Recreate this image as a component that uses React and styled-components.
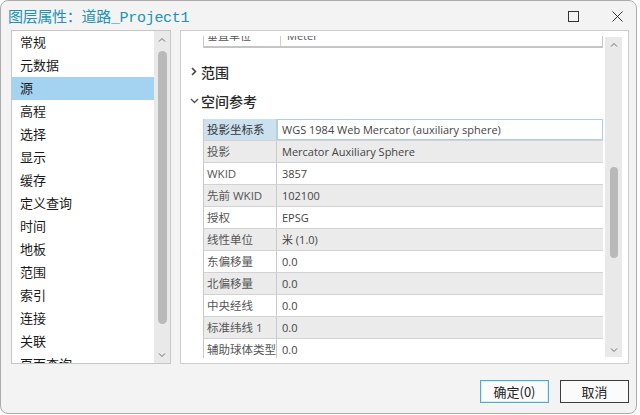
import React from "react"
import styled, { createGlobalStyle } from "styled-components"

const GlobalStyle = createGlobalStyle`
  html, body {
    margin: 0;
    padding: 0;
    background: #ffffff;
  }
  body {
    font-family: "Noto Sans CJK SC", sans-serif;
  }
`

const navItems = [
  "常规",
  "元数据",
  "源",
  "高程",
  "选择",
  "显示",
  "缓存",
  "定义查询",
  "时间",
  "地板",
  "范围",
  "索引",
  "连接",
  "关联",
  "页面查询",
]

const spatialRows = [
  ["投影坐标系", "WGS 1984 Web Mercator (auxiliary sphere)"],
  ["投影", "Mercator Auxiliary Sphere"],
  ["WKID", "3857"],
  ["先前 WKID", "102100"],
  ["授权", "EPSG"],
  ["线性单位", "米 (1.0)"],
  ["东偏移量", "0.0"],
  ["北偏移量", "0.0"],
  ["中央经线", "0.0"],
  ["标准纬线 1", "0.0"],
  ["辅助球体类型", "0.0"],
]

const ChevronUp = () => (
  <svg width="8" height="5" viewBox="0 0 8 5">
    <polyline points="1,4.5 4,1.5 7,4.5" fill="none" stroke="#6a6a6a" strokeWidth="1" />
  </svg>
)

const ChevronDown = () => (
  <svg width="8" height="5" viewBox="0 0 8 5">
    <polyline points="1,0.5 4,3.5 7,0.5" fill="none" stroke="#6a6a6a" strokeWidth="1" />
  </svg>
)

const Scrollbar = ({ width, thumbTop, thumbHeight, thumbWidth, arrow }) => (
  <ScrollTrack $width={width}>
    <ScrollArrow $h={arrow}>
      <ChevronUp />
    </ScrollArrow>
    <ThumbLane>
      <Thumb $top={thumbTop} $height={thumbHeight} $width={thumbWidth} />
    </ThumbLane>
    <ScrollArrow $h={arrow}>
      <ChevronDown />
    </ScrollArrow>
  </ScrollTrack>
)

const SectionHeader = ({ open, gap, children }) => (
  <Header $gap={gap}>
    <Caret>
      {open ? (
        <svg width="9" height="6" viewBox="0 0 9 6">
          <polyline points="1,1 4.5,4.5 8,1" fill="none" stroke="#555" strokeWidth="1.4" />
        </svg>
      ) : (
        <svg width="6" height="9" viewBox="0 0 6 9">
          <polyline points="1,1 4.5,4.5 1,8" fill="none" stroke="#444" strokeWidth="1.6" />
        </svg>
      )}
    </Caret>
    {children}
  </Header>
)

const App = () => (
  <>
    <GlobalStyle />
    <Window>
      <TitleBar>
        <Title>图层属性：道路_Project1</Title>
        <Controls>
          <svg width="11" height="11" viewBox="0 0 11 11">
            <rect x="0.5" y="0.5" width="10" height="10" fill="none" stroke="#333" strokeWidth="1" />
          </svg>
          <svg width="11" height="11" viewBox="0 0 11 11">
            <path d="M0.5 0.5 L10.5 10.5 M10.5 0.5 L0.5 10.5" stroke="#333" strokeWidth="1" />
          </svg>
        </Controls>
      </TitleBar>

      <Body>
        <NavPanel>
          <NavList>
            {navItems.map((item) => (
              <NavItem key={item} $selected={item === "源"}>
                {item}
              </NavItem>
            ))}
          </NavList>
          <Scrollbar width={16} thumbTop={4} thumbHeight={273} thumbWidth={9} arrow={16} />
        </NavPanel>

        <DetailPanel>
          <DetailContent>
            <Viewport>
              <Scrolled>
                <TopTable>
                  <TopRow>
                    <TopLabel>垂直单位</TopLabel>
                    <TopValue>Meter</TopValue>
                  </TopRow>
                </TopTable>
                <SectionHeader gap={9}>范围</SectionHeader>
                <SectionHeader open gap={0}>空间参考</SectionHeader>
                <PropTable>
                  {spatialRows.map(([label, value], i) => (
                    <PropRow key={label} $alt={i % 2 === 1}>
                      <PropLabel $active={i === 0}>{label}</PropLabel>
                      <PropValue $editing={i === 0}>{value}</PropValue>
                    </PropRow>
                  ))}
                </PropTable>
              </Scrolled>
            </Viewport>
          </DetailContent>
          <DetailScroll>
            <Scrollbar width={17} thumbTop={116} thumbHeight={91} thumbWidth={8} arrow={14} />
          </DetailScroll>
        </DetailPanel>
      </Body>

      <Footer>
        <DialogButton $primary>确定(0)</DialogButton>
        <DialogButton>取消</DialogButton>
      </Footer>
    </Window>
  </>
)

export default App

const Window = styled.div`
  width: 637px;
  height: 414px;
  box-sizing: border-box;
  border: 1px solid #acacac;
  border-radius: 8px;
  background: #f3f3f3;
  display: flex;
  flex-direction: column;
  overflow: hidden;
`

const TitleBar = styled.div`
  height: 29px;
  flex-shrink: 0;
  display: flex;
  align-items: center;
  padding: 0 13px 0 7px;
`

const Title = styled.div`
  font-family: "Liberation Mono", "Noto Sans CJK SC", monospace;
  font-size: 15px;
  color: #2192b5;
  letter-spacing: -0.3px;
  white-space: nowrap;
`

const Controls = styled.div`
  margin-left: auto;
  display: flex;
  align-items: center;
  gap: 33px;
  padding-top: 2px;
`

const Body = styled.div`
  height: 334px;
  flex-shrink: 0;
  display: flex;
  gap: 9px;
  padding: 0 7px 0 10px;
`

const NavPanel = styled.div`
  width: 160px;
  box-sizing: border-box;
  border: 1px solid #c6c6c6;
  background: #ffffff;
  display: flex;
`

const NavList = styled.div`
  flex: 1;
  overflow: hidden;
`

const NavItem = styled.div`
  height: 23px;
  line-height: 22px;
  padding-left: 8px;
  font-size: 13px;
  color: #1a1a1a;
  white-space: nowrap;
  background: ${(p) => (p.$selected ? "#a4d3f2" : "transparent")};
`

const ScrollTrack = styled.div`
  width: ${(p) => p.$width}px;
  flex-shrink: 0;
  height: 100%;
  background: #e9e9e9;
  display: flex;
  flex-direction: column;
`

const ScrollArrow = styled.div`
  height: ${(p) => p.$h}px;
  flex-shrink: 0;
  display: flex;
  align-items: center;
  justify-content: center;
`

const ThumbLane = styled.div`
  flex: 1;
  display: flex;
  flex-direction: column;
  align-items: center;
`

const Thumb = styled.div`
  margin-top: ${(p) => p.$top}px;
  height: ${(p) => p.$height}px;
  width: ${(p) => p.$width}px;
  border-radius: 5px;
  background: #b9b9b9;
`

const DetailPanel = styled.div`
  flex: 1;
  box-sizing: border-box;
  border: 1px solid #cdcdcd;
  background: #ffffff;
  display: flex;
`

const DetailContent = styled.div`
  flex: 1;
  padding: 5px 0 5px;
  display: flex;
`

const Viewport = styled.div`
  flex: 1;
  overflow: hidden;
`

const Scrolled = styled.div`
  margin-top: -11px;
`

const DetailScroll = styled.div`
  padding: 6px 6px 6px 2px;
  display: flex;
`

const TopTable = styled.div`
  margin-left: 22px;
  border-left: 1px solid #c8c8c8;
  border-right: 1px solid #c8c8c8;
  border-bottom: 2px solid #c4c4c4;
`

const TopRow = styled.div`
  height: 21px;
  display: flex;
  align-items: center;
  font-family: "Open Sans", "Noto Sans CJK SC", sans-serif;
  font-size: 11px;
  color: #555;
`

const TopLabel = styled.div`
  width: 77px;
  height: 100%;
  line-height: 21px;
  padding-left: 3px;
  box-sizing: border-box;
  border-right: 1px solid #d0d0d0;
`

const TopValue = styled.div`
  padding-left: 6px;
`

const Header = styled.div`
  height: 29px;
  margin-top: ${(p) => p.$gap}px;
  display: flex;
  align-items: center;
  padding-left: 6px;
  font-size: 14px;
  font-weight: 500;
  color: #2a2a2a;
`

const Caret = styled.div`
  width: 14px;
  display: flex;
  align-items: center;
  justify-content: center;
`

const PropTable = styled.div`
  margin: 4px 0 0 22px;
  border-left: 1px solid #c8c8c8;
`

const PropRow = styled.div`
  height: 22px;
  box-sizing: border-box;
  display: flex;
  border-bottom: 1px solid #d2d2d2;
  background: ${(p) => (p.$alt ? "#ebebeb" : "#ffffff")};
  font-family: "Open Sans", "Noto Sans CJK SC", sans-serif;
  font-size: 11px;
  line-height: 21px;
`

const PropLabel = styled.div`
  width: 73px;
  flex-shrink: 0;
  box-sizing: border-box;
  padding-left: 3px;
  border-right: 1px solid #cacaca;
  font-size: 11.5px;
  color: ${(p) => (p.$active ? "#333" : "#555")};
  background: ${(p) => (p.$active ? "#cce1ef" : "transparent")};
  white-space: nowrap;
  overflow: hidden;
`

const PropValue = styled.div`
  flex: 1;
  box-sizing: border-box;
  padding-left: ${(p) => (p.$editing ? 4 : 5)}px;
  color: #444;
  white-space: nowrap;
  border: ${(p) => (p.$editing ? "1px solid #a9d0e8" : "none")};
  background: ${(p) => (p.$editing ? "#ffffff" : "transparent")};
  line-height: ${(p) => (p.$editing ? 19 : 21)}px;
`

const Footer = styled.div`
  display: flex;
  justify-content: flex-end;
  gap: 11px;
  padding: 16px 7px 0 0;
`

const DialogButton = styled.button`
  width: 69px;
  height: 23px;
  box-sizing: border-box;
  padding: 0;
  font-family: "Noto Sans CJK SC", sans-serif;
  font-size: 13px;
  color: #222;
  background: #fbfbfb;
  border: 1px solid ${(p) => (p.$primary ? "#4fadc9" : "#3c3c3c")};
  box-shadow: ${(p) => (p.$primary ? "inset 0 0 0 1px #d8eef5" : "none")};
  border-radius: 0;
`
